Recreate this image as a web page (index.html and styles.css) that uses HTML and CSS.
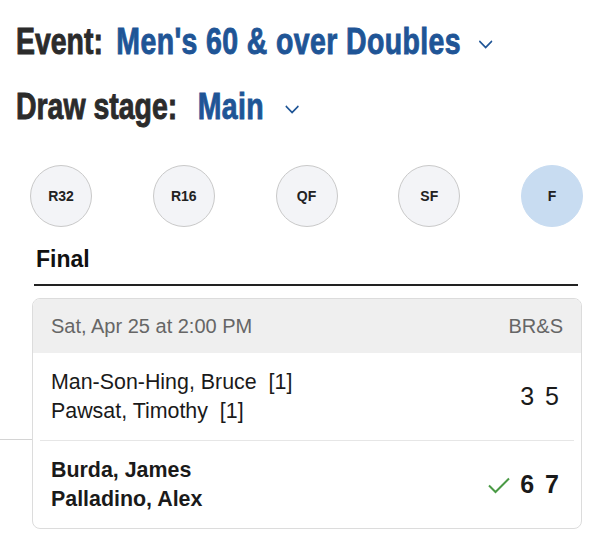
FILE: index.html
```html
<!DOCTYPE html>
<html lang="en">
<head>
    <meta charset="UTF-8">
    <meta name="viewport" content="width=device-width, initial-scale=1.0">
    <title>Draw - Men's 60 &amp; over Doubles</title>
    <link rel="stylesheet" href="styles.css">
</head>
<body>
    <div class="filters">
        <div class="filter-row">
            <span class="filter-label">Event:</span>
            <span class="filter-value">Men's 60 &amp; over Doubles</span>
            <svg class="chevron" width="19" height="10" viewBox="0 0 19 10"><path d="M1.5 2 L9.5 8.5 L17.5 2" fill="none" stroke="#1f5596" stroke-width="1.8"/></svg>
        </div>
        <div class="filter-row second">
            <span class="filter-label">Draw stage:</span>
            <span class="filter-value">Main</span>
            <svg class="chevron" width="19" height="10" viewBox="0 0 19 10"><path d="M1.5 2 L9.5 8.5 L17.5 2" fill="none" stroke="#1f5596" stroke-width="1.8"/></svg>
        </div>
    </div>

    <div class="rounds">
        <div class="round">R32</div>
        <div class="round">R16</div>
        <div class="round">QF</div>
        <div class="round">SF</div>
        <div class="round active">F</div>
    </div>

    <h2 class="round-title">Final</h2>

    <div class="match-area">
        <div class="match">
            <div class="match-head">
                <span>Sat, Apr 25 at 2:00 PM</span>
                <span>BR&amp;S</span>
            </div>
            <div class="team">
                <div class="names">
                    <div>Man-Son-Hing, Bruce&nbsp; [1]</div>
                    <div>Pawsat, Timothy&nbsp; [1]</div>
                </div>
                <div class="score">
                    <span>3</span><span>5</span>
                </div>
            </div>
            <div class="team winner">
                <div class="names">
                    <div>Burda, James</div>
                    <div>Palladino, Alex</div>
                </div>
                <div class="score">
                    <svg class="check" width="24" height="18" viewBox="0 0 24 18"><path d="M2 9.5 L8.5 16 L22 2.5" fill="none" stroke="#4a9a45" stroke-width="2"/></svg>
                    <span>6</span><span>7</span>
                </div>
            </div>
        </div>
    </div>
</body>
</html>
```

FILE: styles.css
```css
body {
    margin: 0;
    font-family: "Liberation Sans", Arial, sans-serif;
    color: #1a1a1a;
    background: #fff;
}
.filters {
    padding: 20px 0 0 16px;
}
/* the heading font is a tall condensed one, so the row is squeezed sideways */
.filter-row {
    display: flex;
    align-items: center;
    width: max-content;
    height: 44px;
    transform: scaleX(0.79);
    transform-origin: left center;
    white-space: nowrap;
}
.filter-row.second {
    margin-top: 21px;
}
.filter-label,
.filter-value {
    font-weight: bold;
    font-size: 36px;
    line-height: 44px;
    -webkit-text-stroke: 0.9px currentColor;
}
.filter-label {
    color: #2b2b2b;
}
.filter-value {
    color: #1f5596;
    margin-left: 17px;
    letter-spacing: 0.5px;
}
.second .filter-value {
    margin-left: 26px;
}
.chevron {
    flex-shrink: 0;
    margin-left: 22px;
    margin-top: 4px;
}
.second .chevron {
    margin-left: 26px;
}
.rounds {
    display: flex;
    justify-content: space-between;
    padding: 0 17px 0 30px;
    margin-top: 36px;
}
.round {
    width: 60px;
    height: 60px;
    border-radius: 50%;
    border: 1px solid #c9c9c9;
    background: #f3f4f7;
    display: flex;
    align-items: center;
    justify-content: center;
    font-weight: bold;
    font-size: 14px;
    color: #222;
}
.round.active {
    background: #c8dcf1;
    border-color: #c8dcf1;
}
.round-title {
    margin: 16px 22px 0 34px;
    padding: 0 0 9px 2px;
    font-size: 23px;
    font-weight: bold;
    line-height: 32px;
    border-bottom: 2px solid #222;
    color: #111;
}
.match-area {
    position: relative;
    padding: 12px 18px 0 32px;
}
.match-area::before {
    content: "";
    position: absolute;
    left: 0;
    top: 153px;
    width: 40px;
    border-top: 1px solid #d4d4d4;
}
.match {
    position: relative;
    border: 1px solid #dcdcdc;
    border-radius: 8px;
    overflow: hidden;
    background: #fff;
}
.match-head {
    display: flex;
    justify-content: space-between;
    align-items: center;
    height: 54px;
    padding: 0 18px;
    background: #efefef;
    color: #666;
    font-size: 20px;
}
.team {
    display: flex;
    justify-content: space-between;
    align-items: center;
    height: 87px;
    margin: 0 7px;
    padding: 0 11px;
    font-size: 21.4px;
    line-height: 29px;
}
.team + .team {
    border-top: 1px solid #e6e6e6;
}
.score {
    display: flex;
    align-items: center;
    gap: 11px;
    font-size: 25px;
    padding-right: 4px;
}
.winner {
    font-weight: bold;
}
.check {
    margin-right: -2px;
}
```
